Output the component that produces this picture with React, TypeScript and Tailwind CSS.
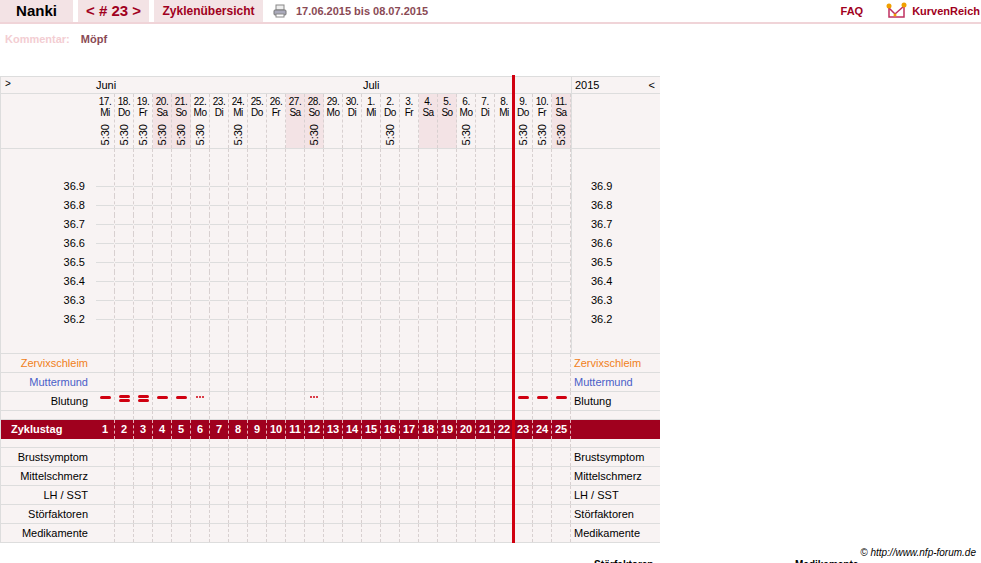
const days = [
  ["17.", "Mi", 1], ["18.", "Do", 1], ["19.", "Fr", 1], ["20.", "Sa", 1], ["21.", "So", 1],
  ["22.", "Mo", 1], ["23.", "Di", 0], ["24.", "Mi", 1], ["25.", "Do", 0], ["26.", "Fr", 0],
  ["27.", "Sa", 0], ["28.", "So", 1], ["29.", "Mo", 0], ["30.", "Di", 0], ["1.", "Mi", 0],
  ["2.", "Do", 1], ["3.", "Fr", 0], ["4.", "Sa", 0], ["5.", "So", 0], ["6.", "Mo", 1],
  ["7.", "Di", 0], ["8.", "Mi", 0], ["9.", "Do", 1], ["10.", "Fr", 1], ["11.", "Sa", 1],
] as const;

const bleed: Record<number, string> = {
  0: "one", 1: "two", 2: "two", 3: "one", 4: "one", 5: "dots", 11: "dots", 22: "one", 23: "one", 24: "one",
};

const temps = ["36.9", "36.8", "36.7", "36.6", "36.5", "36.4", "36.3", "36.2"];
const weekend = (i: number) => days[i][1] === "Sa" || days[i][1] === "So";

function Cells({ children }: { children?: (i: number) => React.ReactNode }) {
  return (
    <div className="flex">
      {days.map((_, i) => (
        <div key={i} className="w-[19px] flex items-center justify-center border-r border-dashed border-[#d8d0d0]">
          {children?.(i)}
        </div>
      ))}
    </div>
  );
}

function Row({ label, right, color = "text-black", h = "h-[19px]", children }: {
  label?: string; right?: string; color?: string; h?: string; children?: (i: number) => React.ReactNode;
}) {
  return (
    <div className={`flex ${h} border-b border-[#ddd]`}>
      <div className={`w-[95px] pr-[8px] text-right flex items-center justify-end ${color}`}>{label}</div>
      <Cells>{children}</Cells>
      <div className={`w-[89px] pl-[3px] flex items-center ${color}`}>{right}</div>
    </div>
  );
}

export default function App() {
  return (
    <div className="relative w-[981px] h-[563px] overflow-hidden bg-white text-[11px] font-[Liberation_Sans,Arial,sans-serif]">
      <div className="flex h-[24px] border-b-2 border-[#f0d4d8] items-stretch">
        <div className="w-[73px] bg-[#f3e3e5] flex items-center justify-center text-[15px] font-bold text-black">Nanki</div>
        <div className="w-[71px] ml-[5px] bg-[#f3e3e5] flex items-center justify-center text-[15px] font-bold text-[#a00020]">&lt; # 23 &gt;</div>
        <div className="w-[109px] ml-[5px] bg-[#f3e3e5] flex items-center justify-center text-[12px] font-bold text-[#a00020]">Zyklenübersicht</div>
        <div className="flex items-center ml-[10px] gap-[9px]">
          <svg width="14" height="14" viewBox="0 0 14 14">
            <rect x="3" y="1" width="8" height="5" fill="#eee" stroke="#888" />
            <rect x="1" y="6" width="12" height="5" rx="1" fill="#aab" stroke="#777" />
            <rect x="3" y="10" width="8" height="3" fill="#fff" stroke="#888" />
          </svg>
          <span className="font-bold text-[#8a4a55] text-[11px]">17.06.2015 bis 08.07.2015</span>
        </div>
        <div className="ml-auto flex items-center">
          <span className="font-bold text-[#a00020] text-[11px] mr-[23px]">FAQ</span>
          <svg width="22" height="18" viewBox="0 0 22 18" className="mr-[4px]">
            <path d="M3 6 V15 H18 V4" fill="none" stroke="#c03060" strokeWidth="1.5" />
            <path d="M3 6 L9 12 L18 4" fill="none" stroke="#c03060" strokeWidth="1.5" />
            <circle cx="3" cy="4" r="2.5" fill="#f0a000" />
            <circle cx="18" cy="3" r="2.5" fill="#f0a000" />
            <circle cx="9" cy="13" r="1.5" fill="#f0a000" />
          </svg>
          <span className="font-bold text-[#a00020] text-[11px] mr-[1px]">KurvenReich</span>
        </div>
      </div>

      <div className="flex h-[24px] mt-[3px] items-center pl-[5px] gap-[11px] font-bold">
        <span className="text-[#f3cdd2]">Kommentar:</span>
        <span className="text-[#8a4a55]">Möpf</span>
      </div>

      <div className="relative mt-[25px] w-[660px] bg-[#f8f3f3] border-l border-t border-[#ddd] text-[10px] leading-[11px]">
        <div className="flex h-[17px] border-b border-[#ddd]">
          <div className="w-[95px] pl-[4px] pt-[1px]">&gt;</div>
          <div className="w-[475px] relative">
            <span className="absolute left-0 top-[3px] text-[11px]">Juni</span>
            <span className="absolute left-[267px] top-[3px] text-[11px]">Juli</span>
          </div>
          <div className="w-[89px] border-l border-[#ddd] pl-[3px] pt-[3px] text-[11px] flex justify-between pr-[5px]">
            <span>2015</span><span>&lt;</span>
          </div>
        </div>
        <div className="flex h-[55px] border-b border-[#ddd]">
          <div className="w-[95px]" />
          <div className="flex">
            {days.map((d, i) => (
              <div key={i} className={`w-[19px] flex flex-col items-center border-r border-dashed border-[#d8d0d0] tracking-[-0.5px] ${weekend(i) ? "bg-[#f3e3e5]" : ""}`}>
                <span className="mt-[2px]">{d[0]}</span>
                <span>{d[1]}</span>
                {d[2] ? <span className="mt-[6px] text-[11px] [writing-mode:vertical-rl] rotate-180 tracking-normal">5:30</span> : null}
              </div>
            ))}
          </div>
          <div className="w-[89px] border-l border-[#ddd]" />
        </div>

        <div className="flex h-[205px] border-b border-[#ddd] text-[11px]">
          <div className="w-[95px] flex flex-col pt-[28px]">
            {temps.map((t) => (
              <div key={t} className="h-[19px] flex items-center justify-end pr-[11px]">{t}</div>
            ))}
          </div>
          <div className="flex flex-col">
            <div className="h-[28px] flex"><Cells /></div>
            {temps.map((t) => (
              <div key={t} className="h-[19px] flex">
                <Cells>{() => <div className="h-px w-[19px] bg-[#ddd]" />}</Cells>
              </div>
            ))}
            <div className="flex-1 flex"><Cells /></div>
          </div>
          <div className="w-[89px] border-l border-[#ddd] flex flex-col pt-[28px]">
            {temps.map((t) => (
              <div key={t} className="h-[19px] flex items-center pl-[19px]">{t}</div>
            ))}
          </div>
        </div>

        <div className="text-[11px]">
          <Row label="Zervixschleim" right="Zervixschleim" color="text-[#f08020]" />
          <Row label="Muttermund" right="Muttermund" color="text-[#4a60c8]" />
          <Row label="Blutung" right="Blutung">
            {(i) =>
              bleed[i] === "one" ? (
                <div className="w-[11px] h-[3px] rounded-full bg-[#d00010] -mt-[8px]" />
              ) : bleed[i] === "two" ? (
                <div className="flex flex-col gap-[1px] -mt-[6px]">
                  <div className="w-[11px] h-[3px] rounded-full bg-[#d00010]" />
                  <div className="w-[11px] h-[3px] rounded-full bg-[#d00010]" />
                </div>
              ) : bleed[i] === "dots" ? (
                <div className="flex gap-[1px] -mt-[8px]">
                  <div className="w-[2px] h-[2px] bg-[#d00010] rounded-full" />
                  <div className="w-[2px] h-[2px] bg-[#d00010] rounded-full" />
                  <div className="w-[2px] h-[2px] bg-[#d00010] rounded-full" />
                </div>
              ) : null
            }
          </Row>
          <Row h="h-[9px]" />
          <div className="flex h-[19px] bg-[#a0001e] text-white font-bold text-[11px]">
            <div className="w-[95px] pl-[10px] flex items-center">Zyklustag</div>
            <div className="flex">
              {days.map((_, i) => (
                <div key={i} className="w-[19px] flex items-center justify-center border-r border-dashed border-[#e8b0b8]">{i + 1}</div>
              ))}
            </div>
            <div className="w-[89px]" />
          </div>
          <Row h="h-[9px]" />
          <Row label="Brustsymptom" right="Brustsymptom" />
          <Row label="Mittelschmerz" right="Mittelschmerz" />
          <Row label="LH / SST" right="LH / SST" />
          <Row label="Störfaktoren" right="Störfaktoren" />
          <Row label="Medikamente" right="Medikamente" />
        </div>

        <div className="absolute left-[511px] top-[-2px] bottom-0 w-[3px] bg-[#d00010]" />
      </div>

      <div className="absolute right-[5px] top-[545px] text-[10px] italic text-black">© http://www.nfp-forum.de</div>
      <div className="absolute left-[594px] top-[557px] text-[10px] font-bold">Störfaktoren</div>
      <div className="absolute left-[795px] top-[557px] text-[10px] font-bold">Medikamente</div>
    </div>
  );
}
